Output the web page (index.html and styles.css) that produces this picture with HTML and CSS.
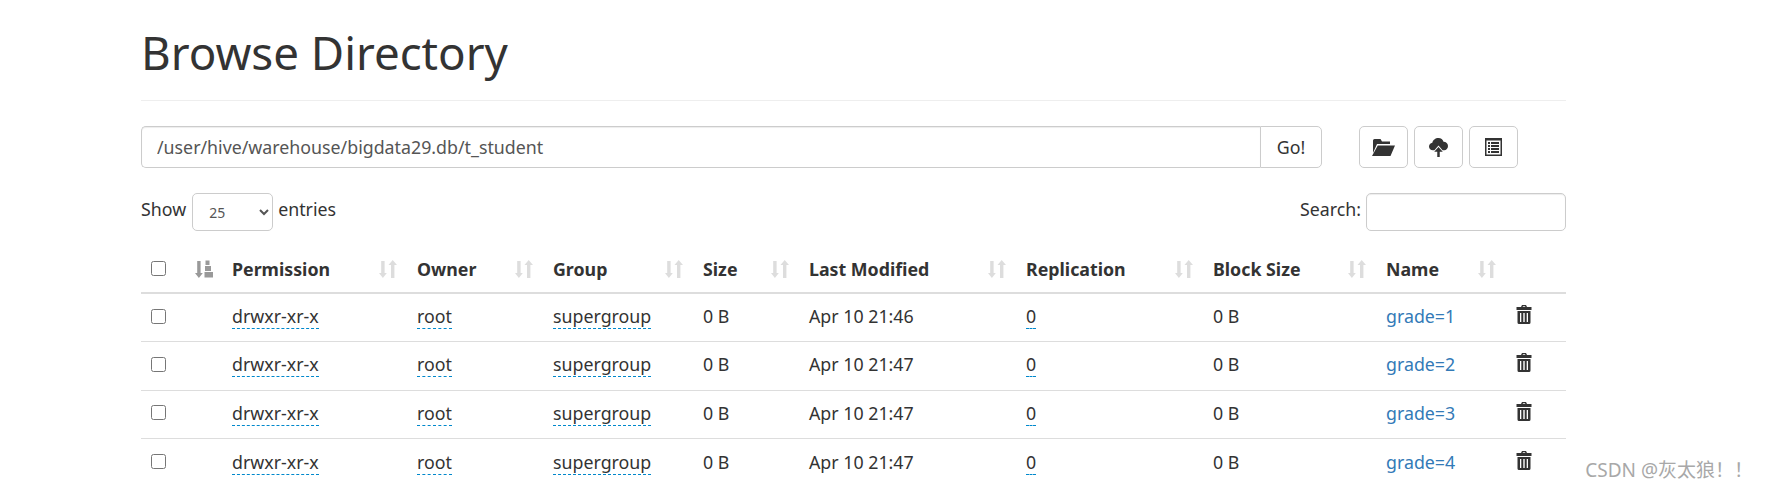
FILE: index.html
```html
<!DOCTYPE html>
<html lang="en">
<head>
    <meta charset="UTF-8">
    <meta name="viewport" content="width=device-width, initial-scale=1.0">
    <title>Browse Directory</title>
    <link rel="stylesheet" href="styles.css">
</head>
<body>
    <svg class="defs" width="0" height="0">
        <symbol id="sort" viewBox="0 0 18 18">
            <path d="M2.200 1h3.400v12h2.200L3.900 18 0 13h2.200z"/>
            <path d="M12 18h3.400V5H18L13.700 0 9.500 5H12z"/>
        </symbol>
        <symbol id="sort-asc" viewBox="0 0 18 18">
            <path d="M2.200 1h3.400v12h2.200L3.900 18 0 13h2.200z"/>
            <path d="M10.500.5h4V5h-4zM10 6h6v5h-6zM9.500 12H18v5.500H9.500z"/>
        </symbol>
        <symbol id="trash" viewBox="0 0 16 19">
            <path fill-rule="evenodd" d="M6 0h4l1 2h4.500v3H.500V2H5zM7 1.300 6.600 2h2.800L9 1.300zM1.500 6h13v11.500a1.500 1.500 0 0 1-1.500 1.500H3a1.500 1.500 0 0 1-1.500-1.500zM4 8v9h1.300V8zM7.300 8v9h1.400V8zM10.700 8v9H12V8z"/>
        </symbol>
    </svg>

    <div class="page">
        <h1 class="title">Browse Directory</h1>

        <div class="toolbar">
            <div class="path-group">
                <input class="path-input" type="text" value="/user/hive/warehouse/bigdata29.db/t_student">
                <button class="go-btn">Go!</button>
            </div>
            <div class="tool-btns">
                <button class="tool-btn">
                    <svg width="23" height="17" viewBox="0 0 23 17"><path d="M2.500 0h6l1.500 2.500h8V5H5L1 14V1.500A1.500 1.500 0 0 1 2.500 0zM5.800 6.500H23L18.500 17H0z"/></svg>
                </button>
                <button class="tool-btn">
                    <svg width="19" height="19" viewBox="0 0 20 20"><path d="M10 0c2.600 0 4.700 1.700 5.300 4 2.700 0 4.700 2 4.700 4.500S18.200 13 16 13h-1.700L10 8l-4.300 5H4.200C1.800 13 0 11.200 0 9c0-2 1.500-3.700 3.500-4C4 2.200 6.700 0 10 0zM10 9.500l4.500 5h-3.200V20H8.700v-5.500H5.500z"/></svg>
                </button>
                <button class="tool-btn">
                    <svg width="17" height="18" viewBox="0 0 17 18"><path fill-rule="evenodd" d="M0 0h17v18H0zM1.500 2.500v14h14v-14zM3 4h2v2H3zM6 4h8v2H6zM3 7h2v2H3zM6 7h8v2H6zM3 10h2v2H3zM6 10h8v2H6zM3 13h2v2H3zM6 13h8v2H6z"/></svg>
                </button>
            </div>
        </div>

        <div class="filters">
            <label class="length">Show
                <select class="length-select"><option>25</option></select>
                entries</label>
            <label class="search">Search: <input class="search-input" type="text"></label>
        </div>

        <table class="listing">
            <colgroup>
                <col class="c-check"><col class="c-icon"><col class="c-perm"><col class="c-owner"><col class="c-group"><col class="c-size"><col class="c-date"><col class="c-repl"><col class="c-block"><col class="c-name"><col class="c-del">
            </colgroup>
            <thead>
                <tr>
                    <th><input class="check" type="checkbox"></th>
                    <th class="th-sorted"><svg class="sort-on"><use href="#sort-asc"/></svg></th>
                    <th><div class="th-in">Permission<svg class="sort-off"><use href="#sort"/></svg></div></th>
                    <th><div class="th-in">Owner<svg class="sort-off"><use href="#sort"/></svg></div></th>
                    <th><div class="th-in">Group<svg class="sort-off"><use href="#sort"/></svg></div></th>
                    <th><div class="th-in">Size<svg class="sort-off"><use href="#sort"/></svg></div></th>
                    <th><div class="th-in">Last Modified<svg class="sort-off"><use href="#sort"/></svg></div></th>
                    <th><div class="th-in">Replication<svg class="sort-off"><use href="#sort"/></svg></div></th>
                    <th><div class="th-in">Block Size<svg class="sort-off"><use href="#sort"/></svg></div></th>
                    <th><div class="th-in">Name<svg class="sort-off"><use href="#sort"/></svg></div></th>
                    <th></th>
                </tr>
            </thead>
            <tbody>
                <tr>
                    <td><input class="check" type="checkbox"></td><td></td>
                    <td><span class="editable">drwxr-xr-x</span></td>
                    <td><span class="editable">root</span></td>
                    <td><span class="editable">supergroup</span></td>
                    <td>0 B</td><td>Apr 10 21:46</td>
                    <td><span class="editable">0</span></td>
                    <td>0 B</td>
                    <td><a class="file-link" href="#">grade=1</a></td>
                    <td><svg class="trash"><use href="#trash"/></svg></td>
                </tr>
                <tr>
                    <td><input class="check" type="checkbox"></td><td></td>
                    <td><span class="editable">drwxr-xr-x</span></td>
                    <td><span class="editable">root</span></td>
                    <td><span class="editable">supergroup</span></td>
                    <td>0 B</td><td>Apr 10 21:47</td>
                    <td><span class="editable">0</span></td>
                    <td>0 B</td>
                    <td><a class="file-link" href="#">grade=2</a></td>
                    <td><svg class="trash"><use href="#trash"/></svg></td>
                </tr>
                <tr>
                    <td><input class="check" type="checkbox"></td><td></td>
                    <td><span class="editable">drwxr-xr-x</span></td>
                    <td><span class="editable">root</span></td>
                    <td><span class="editable">supergroup</span></td>
                    <td>0 B</td><td>Apr 10 21:47</td>
                    <td><span class="editable">0</span></td>
                    <td>0 B</td>
                    <td><a class="file-link" href="#">grade=3</a></td>
                    <td><svg class="trash"><use href="#trash"/></svg></td>
                </tr>
                <tr>
                    <td><input class="check" type="checkbox"></td><td></td>
                    <td><span class="editable">drwxr-xr-x</span></td>
                    <td><span class="editable">root</span></td>
                    <td><span class="editable">supergroup</span></td>
                    <td>0 B</td><td>Apr 10 21:47</td>
                    <td><span class="editable">0</span></td>
                    <td>0 B</td>
                    <td><a class="file-link" href="#">grade=4</a></td>
                    <td><svg class="trash"><use href="#trash"/></svg></td>
                </tr>
            </tbody>
        </table>
    </div>

    <div class="watermark">CSDN @灰太狼！！</div>
</body>
</html>
```

FILE: styles.css
```css
/* page */
html, body {
    height: 100%;
    overflow: hidden;
}
body {
    margin: 0;
    background: #fff;
    color: #333;
    font-family: "Noto Sans", "Noto Sans CJK SC", sans-serif;
    font-size: 17.8px;
}
.defs {
    display: block;
}
.page {
    width: 1425px;
    margin-left: 141px;
}

/* title */
.title {
    margin: 0;
    height: 101px;
    box-sizing: border-box;
    padding-top: 20px;
    font-size: 45.7px;
    line-height: 64px;
    font-weight: 400;
    border-bottom: 1px solid #eee;
}

/* path bar */
.toolbar {
    display: flex;
    margin-top: 25px;
}
.path-group {
    display: flex;
    width: 1181px;
    height: 42px;
}
.path-input {
    flex: 1;
    min-width: 0;
    box-sizing: border-box;
    padding: 0 15px;
    border: 1px solid #ccc;
    border-right: 0;
    border-radius: 5px 0 0 5px;
    box-shadow: inset 0 1px 1px rgba(0,0,0,.075);
    color: #555;
    font: inherit;
}
.go-btn {
    width: 62px;
    border: 1px solid #ccc;
    border-radius: 0 5px 5px 0;
    background: #fff;
    color: #333;
    font: inherit;
}
.tool-btns {
    display: flex;
    gap: 6px;
    margin-left: 37px;
}
.tool-btn {
    display: flex;
    align-items: center;
    justify-content: center;
    width: 49px;
    height: 42px;
    padding: 0;
    border: 1px solid #ccc;
    border-radius: 5px;
    background: #fff;
}
.tool-btn svg {
    fill: #333;
}

/* show / search */
.filters {
    display: flex;
    justify-content: space-between;
    margin-top: 25px;
}
.length, .search {
    display: flex;
    align-items: flex-start;
    gap: 5px;
    line-height: 33px;
}
.length-select {
    width: 81px;
    height: 38px;
    margin-left: 1px;
    padding-left: 12px;
    border: 1px solid #ccc;
    border-radius: 5px;
    background: #fff;
    color: #555;
    font-family: inherit;
    font-size: 14px;
}
.search-input {
    width: 200px;
    height: 38px;
    box-sizing: border-box;
    border: 1px solid #ccc;
    border-radius: 5px;
    box-shadow: inset 0 1px 1px rgba(0,0,0,.075);
}

/* table */
.listing {
    width: 1425px;
    margin-top: 14px;
    table-layout: fixed;
    border-collapse: collapse;
}
.c-check { width: 43px; }
.c-icon { width: 40px; }
.c-perm { width: 185px; }
.c-owner { width: 136px; }
.c-group { width: 150px; }
.c-size { width: 106px; }
.c-date { width: 217px; }
.c-repl { width: 187px; }
.c-block { width: 173px; }
.c-name { width: 130px; }
.listing th {
    height: 47px;
    padding: 0 8px;
    text-align: left;
    font-weight: 700;
    border-bottom: 2px solid #ddd;
}
.listing td {
    height: 48.5px;
    padding: 0 8px 3px;
    box-sizing: border-box;
    border-bottom: 1px solid #ddd;
}
.listing tbody tr:last-child td {
    border-bottom: 0;
}
.th-in {
    display: flex;
    justify-content: space-between;
    align-items: center;
    padding-right: 4px;
}
.sort-off, .sort-on {
    display: block;
    width: 18px;
    height: 18px;
}
.sort-off {
    fill: #ddd;
}
.sort-on {
    margin-left: 3px;
    fill: #999;
}
.check {
    display: block;
    width: 15px;
    height: 15px;
    margin: 0 0 0 2px;
}
.editable {
    border-bottom: 1px dashed #08c;
}
.file-link {
    color: #337ab7;
    text-decoration: none;
}
.trash {
    display: block;
    width: 16px;
    height: 19px;
    margin: 0 0 3px 0;
    fill: #333;
}

/* csdn mark over the corner */
.watermark {
    position: absolute;
    right: 14px;
    bottom: 5px;
    color: #a8a8a8;
    font-size: 19px;
}
```
